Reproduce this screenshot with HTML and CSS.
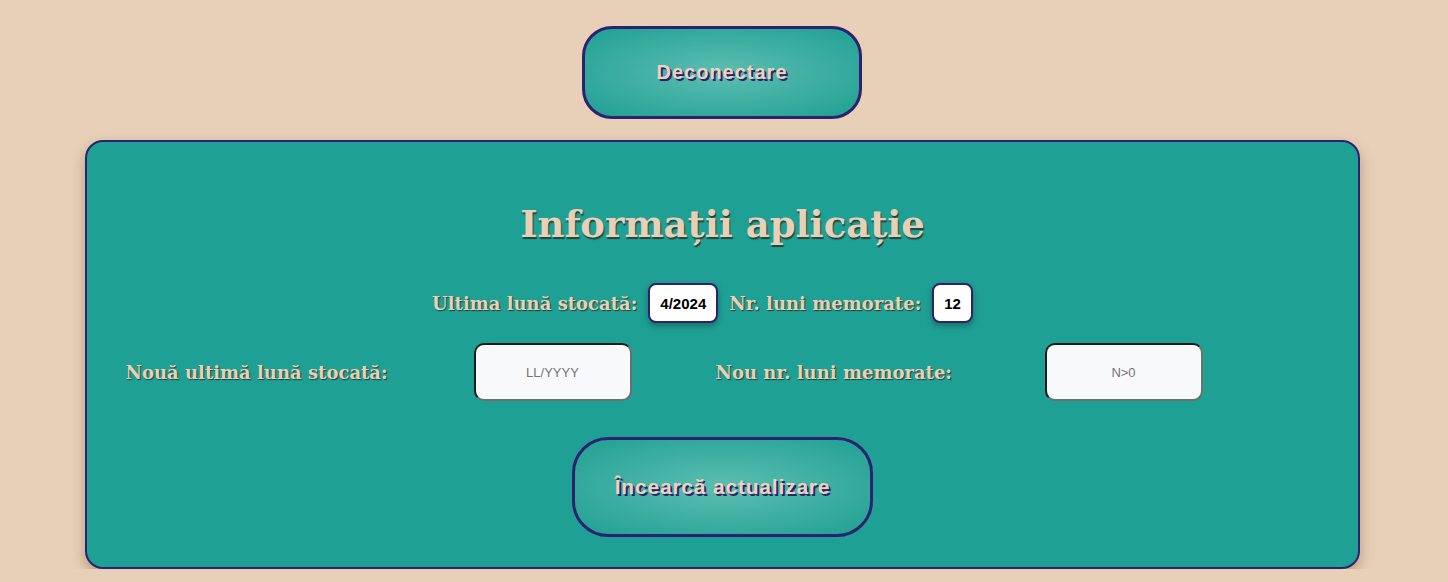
FILE: index.html
```html
<!DOCTYPE html>
<html lang="ro">
<head>
<meta charset="utf-8">
<title>Informații aplicație</title>
<link rel="stylesheet" href="styles.css">
</head>
<body>
<div class="page">
  <button class="btn btn-logout">Deconectare</button>
  <section class="panel">
    <h1 class="title">Informații aplicație</h1>
    <div class="current">
      <span class="label">Ultima lună stocată:</span>
      <span class="value">4/2024</span>
      <span class="label">Nr. luni memorate:</span>
      <span class="value">12</span>
    </div>
    <div class="edit">
      <label class="label label-a">Nouă ultimă lună stocată:</label>
      <input class="field" type="text" placeholder="LL/YYYY">
      <label class="label label-b">Nou nr. luni memorate:</label>
      <input class="field" type="text" placeholder="N&gt;0">
    </div>
    <button class="btn btn-update">Încearcă actualizare</button>
  </section>
</div>
</body>
</html>
```

FILE: styles.css
```css
html, body {
  margin: 0;
  padding: 0;
  background: #e8d0b8;
}
.page {
  width: 1444px;
  padding-top: 26px;
  display: flex;
  flex-direction: column;
  align-items: center;
}
.btn {
  box-sizing: border-box;
  border: 3px solid #2d2270;
  background: radial-gradient(ellipse at center, #5dbdb1 0%, #1fa093 100%);
  color: #ecd3bb;
  font-family: "Liberation Sans", Arial, sans-serif;
  font-weight: bold;
  font-size: 21px;
  letter-spacing: 0.8px;
  text-shadow: 2px 2px 0 #2d2270;
  cursor: pointer;
}
.btn-logout {
  width: 280px;
  height: 93px;
  border-radius: 30px;
  margin-bottom: 21px;
  font-size: 20px;
  letter-spacing: 1px;
}
.panel {
  box-sizing: border-box;
  width: 1275px;
  background: #1fa094;
  border: 2px solid #2d2270;
  border-radius: 18px;
  box-shadow: 0 6px 14px rgba(80, 50, 20, 0.35);
  padding: 60px 38px 30px 39px;
  display: flex;
  flex-direction: column;
  align-items: center;
}
.title {
  margin: 0 0 37px;
  font-family: "DejaVu Serif", Georgia, serif;
  font-weight: bold;
  font-size: 37px;
  line-height: 44px;
  color: #e8d0b8;
  text-shadow: 1px 2px 1px rgba(40, 30, 20, 0.7);
}
.label {
  font-family: "DejaVu Serif", Georgia, serif;
  font-weight: bold;
  font-size: 18px;
  color: #e8d0b8;
  text-shadow: 1px 1px 1px rgba(40, 30, 20, 0.75);
}
.current {
  display: flex;
  align-items: center;
  gap: 11px;
  margin-bottom: 20px;
  padding-right: 40px;
}
.value {
  box-sizing: border-box;
  height: 40px;
  padding: 0 10px;
  display: flex;
  align-items: center;
  background: #ffffff;
  border: 2px solid #2d2270;
  border-radius: 8px;
  box-shadow: 0 3px 6px rgba(0, 0, 0, 0.3);
  font-family: "Liberation Sans", Arial, sans-serif;
  font-weight: bold;
  font-size: 15px;
  color: #000;
}
.edit {
  align-self: stretch;
  display: flex;
  align-items: center;
  gap: 84px;
  margin-bottom: 36px;
}
.label-a {
  width: 264px;
}
.label-b {
  width: 245px;
}
.field {
  box-sizing: border-box;
  width: 158px;
  height: 58px;
  background: #f8f9fb;
  border: 2px solid;
  border-color: #1c1c1c #6e6e6e #6e6e6e #1c1c1c;
  border-radius: 10px;
  text-align: center;
  font-family: "Liberation Sans", Arial, sans-serif;
  font-size: 13px;
  color: #333;
}
.field::placeholder {
  color: #757575;
}
.btn-update {
  width: 301px;
  height: 100px;
  border-radius: 36px;
}
```
